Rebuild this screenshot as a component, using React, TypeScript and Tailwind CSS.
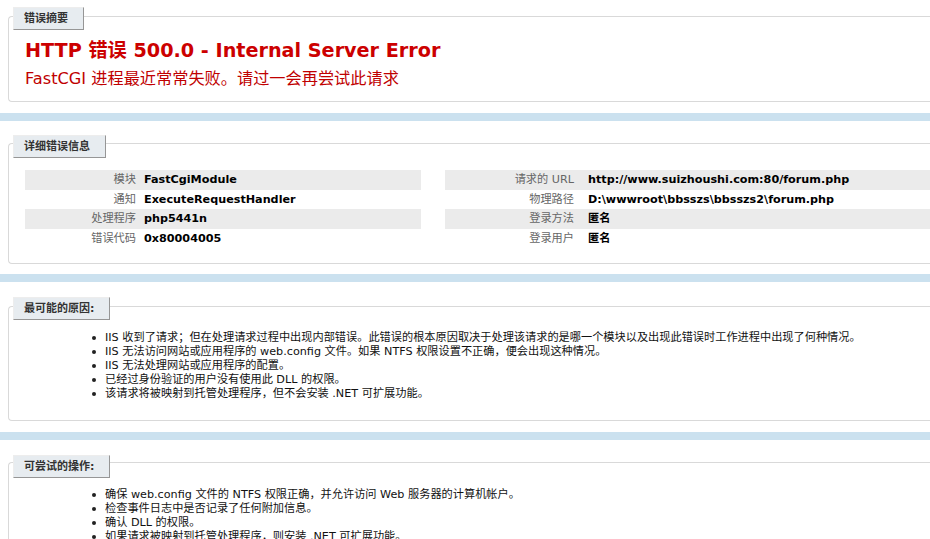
const leftRows = [
  ["模块", "FastCgiModule"],
  ["通知", "ExecuteRequestHandler"],
  ["处理程序", "php5441n"],
  ["错误代码", "0x80004005"],
]

const rightRows = [
  ["请求的 URL", "http://www.suizhoushi.com:80/forum.php"],
  ["物理路径", "D:\\wwwroot\\bbsszs\\bbsszs2\\forum.php"],
  ["登录方法", "匿名"],
  ["登录用户", "匿名"],
]

const causes = [
  "IIS 收到了请求；但在处理请求过程中出现内部错误。此错误的根本原因取决于处理该请求的是哪一个模块以及出现此错误时工作进程中出现了何种情况。",
  "IIS 无法访问网站或应用程序的 web.config 文件。如果 NTFS 权限设置不正确，便会出现这种情况。",
  "IIS 无法处理网站或应用程序的配置。",
  "已经过身份验证的用户没有使用此 DLL 的权限。",
  "该请求将被映射到托管处理程序，但不会安装 .NET 可扩展功能。",
]

const actions = [
  "确保 web.config 文件的 NTFS 权限正确，并允许访问 Web 服务器的计算机帐户。",
  "检查事件日志中是否记录了任何附加信息。",
  "确认 DLL 的权限。",
  "如果请求被映射到托管处理程序，则安装 .NET 可扩展功能。",
]

function Tab({ children, className }: { children: React.ReactNode; className: string }) {
  return (
    <div
      className={`ml-[4px] w-fit border border-t-[#ededed] border-l-[#ededed] border-r-[#969696] border-b-[#969696] bg-[#e7ecf0] pl-[10px] pr-[15px] py-[4px] text-[11px] leading-[13px] font-bold text-[#333] whitespace-nowrap ${className}`}
    >
      {children}
    </div>
  )
}

function InfoTable({ rows, className, labelClass }: { rows: string[][]; className: string; labelClass: string }) {
  return (
    <div className={className}>
      {rows.map(([label, value], i) => (
        <div key={i} className="flex odd:bg-[#ebebeb] py-[3px] text-[11.2px] leading-[13.5px] whitespace-nowrap">
          <div className={`text-right text-[#666] ${labelClass}`}>{label}</div>
          <div className="font-bold text-black">{value}</div>
        </div>
      ))}
    </div>
  )
}

function BulletList({ items, className }: { items: string[]; className: string }) {
  return (
    <ul className={`ml-[83px] ${className}`}>
      {items.map((t, i) => (
        <li key={i} className="flex items-center h-[14px] text-[11.2px] leading-[14px] text-[#111] whitespace-nowrap">
          <span className="w-[4px] h-[4px] rounded-full bg-[#222] mr-[9px] shrink-0" />
          {t}
        </li>
      ))}
    </ul>
  )
}

export default function App() {
  return (
    <div className="min-h-screen overflow-hidden bg-[#cbe1ef] flex flex-col gap-[8px] font-[family-name:'DejaVu_Sans','Noto_Sans_CJK_SC',sans-serif]">
      {/* 错误摘要 */}
      <div className="bg-white pt-[16px] pb-[11px] pl-[8px]">
        <div className="border border-r-0 border-[#d9d9d9] rounded-l-[4px] pb-[12px]">
          <Tab className="-mt-[10px]">错误摘要</Tab>
          <h2 className="mt-[9px] ml-[16px] text-[19.2px] leading-[23px] font-bold text-[#cc0000] whitespace-nowrap">
            HTTP 错误 500.0 - Internal Server Error
          </h2>
          <h3 className="mt-[7px] ml-[16px] text-[16.2px] leading-[20px] text-[#c00000] whitespace-nowrap">
            FastCGI 进程最近常常失败。请过一会再尝试此请求
          </h3>
        </div>
      </div>

      {/* 详细错误信息 */}
      <div className="bg-white pt-[22px] pb-[10px] pl-[8px]">
        <div className="border border-r-0 border-[#d9d9d9] rounded-l-[4px] pb-[15px]">
          <Tab className="-mt-[9px]">详细错误信息</Tab>
          <div className="flex mt-[12px] ml-[16px]">
            <InfoTable rows={leftRows} className="w-[396px] shrink-0" labelClass="w-[119px] pr-[8px]" />
            <InfoTable rows={rightRows} className="ml-[24px] flex-1" labelClass="w-[143px] pr-[14px]" />
          </div>
        </div>
      </div>

      {/* 最可能的原因 */}
      <div className="bg-white pt-[24px] pb-[11px] pl-[8px]">
        <div className="border border-r-0 border-[#d9d9d9] rounded-l-[4px] pb-[19px]">
          <Tab className="-mt-[10px]">最可能的原因:</Tab>
          <BulletList items={causes} className="mt-[11px]" />
        </div>
      </div>

      {/* 可尝试的操作 */}
      <div className="bg-white pt-[22px] pb-[11px] pl-[8px]">
        <div className="border border-r-0 border-[#d9d9d9] rounded-l-[4px] pb-[19px]">
          <Tab className="-mt-[8px]">可尝试的操作:</Tab>
          <BulletList items={actions} className="mt-[10px]" />
        </div>
      </div>
    </div>
  )
}
